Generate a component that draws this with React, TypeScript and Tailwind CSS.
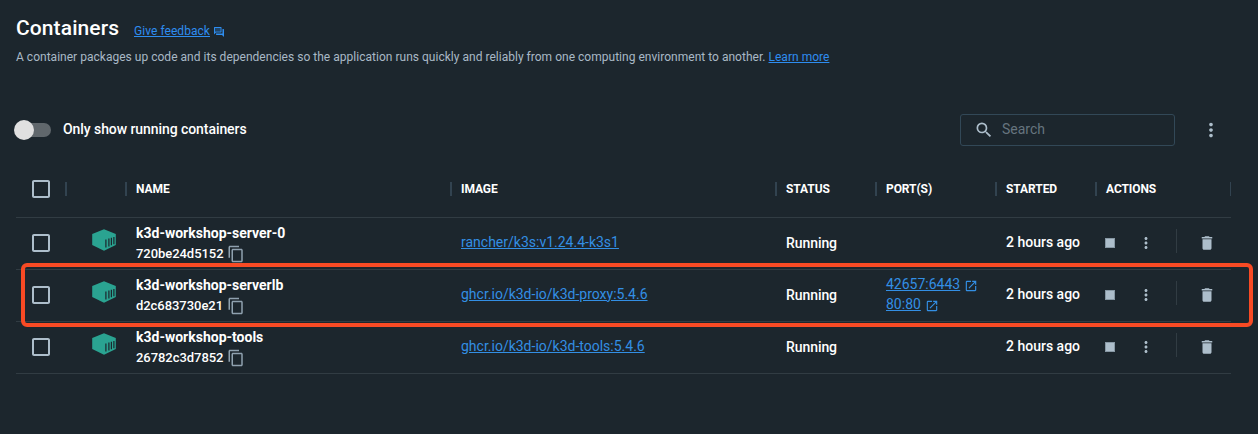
import {
  MdSearch,
  MdMoreVert,
  MdDelete,
  MdOutlineContentCopy,
  MdOpenInNew,
  MdCheckBoxOutlineBlank,
} from "react-icons/md";

type Container = { name: string; id: string; image: string; ports: string[]; highlighted?: boolean };

const containers: Container[] = [
  { name: "k3d-workshop-server-0", id: "720be24d5152", image: "rancher/k3s:v1.24.4-k3s1", ports: [] },
  { name: "k3d-workshop-serverlb", id: "d2c683730e21", image: "ghcr.io/k3d-io/k3d-proxy:5.4.6", ports: ["42657:6443", "80:80"], highlighted: true },
  { name: "k3d-workshop-tools", id: "26782c3d7852", image: "ghcr.io/k3d-io/k3d-tools:5.4.6", ports: [] },
];

const headings = ["", "NAME", "IMAGE", "STATUS", "PORT(S)", "STARTED", "ACTIONS"];

const columns = "grid grid-cols-[50px_60px_325px_325px_100px_120px_100px_135px]";

function ContainerIcon() {
  return (
    <svg width="24" height="22" viewBox="0 0 24 22" className="block">
      <path d="M12 0.3 23.8 5v11L12 21.7 0.2 16V5Z" fill="#2aa391" />
      <path d="M13.9 10.5v8.1M16.9 9.5v7.9M19.4 8.7v7.6M21.9 8v7.2" stroke="#1c262d" strokeWidth="1.2" fill="none" />
    </svg>
  );
}

function FeedbackIcon() {
  return (
    <svg width="12" height="12" viewBox="0 0 24 24" fill="#2e8df0" className="mt-[7px] ml-[3px]">
      <path d="M15 4v7H4V4h11m1-2H3c-.55 0-1 .45-1 1v14l4-4h10c.55 0 1-.45 1-1V3c0-.55-.45-1-1-1zm5 4h-2v9H6v2c0 .55.45 1 1 1h11l4 4V7c0-.55-.45-1-1-1z" />
      <path d="M4 4h11v7H4z" opacity="0.3" />
    </svg>
  );
}

function Row({ item }: { item: Container }) {
  return (
    <div className={`${columns} relative h-[52px] border-b border-[#313c43]`}>
      <div className="flex items-center pb-[2px] pl-[13px]">
        <MdCheckBoxOutlineBlank size={24} className="text-[#adbecb]" />
      </div>
      <div className="flex pt-[11px] pl-[26px]">
        <ContainerIcon />
      </div>
      <div className="flex flex-col pt-[5px] pl-[10px]">
        <span className="text-sm leading-5 font-bold">{item.name}</span>
        <div className="flex gap-[3px] pt-px text-[13px] leading-5 font-medium tracking-[-0.05px]">
          <span className="w-[88px]">{item.id}</span>
          <MdOutlineContentCopy size={18} className="mt-px text-[#8fa1af]" />
        </div>
      </div>
      <div className="flex items-center pb-[4px] pl-[10px] text-sm">
        <a className="text-[#338fe4] underline">{item.image}</a>
      </div>
      <div className="flex items-center pb-[2px] pl-[10px] text-sm font-medium tracking-[-0.07px]">Running</div>
      <div className="flex flex-col justify-center pb-[3px] pl-[10px] text-sm leading-5">
        {item.ports.map((port) => (
          <div key={port} className="flex items-center gap-[4px] text-[#338fe4]">
            <a className="underline">{port}</a>
            <MdOpenInNew size={14} className="mt-[3px]" />
          </div>
        ))}
      </div>
      <div className="flex items-center pb-[4px] pl-[10px] text-sm font-medium">2 hours ago</div>
      <div className="flex items-center pb-[2px] text-[#adbecb]">
        <div className="ml-[9px] flex w-[10px] justify-center">
          <span className="size-[10px] border border-[#8798a4] bg-[#adbecb]" />
        </div>
        <MdMoreVert size={18} className="ml-[22px]" />
        <span className="-mt-[3px] ml-[21px] h-6 w-px bg-[#313c43]" />
        <MdDelete size={18} className="ml-[21px]" />
      </div>
      {item.highlighted && (
        <div className="pointer-events-none absolute -top-[7px] left-[5px] z-10 h-[64px] w-[1232px] rounded-md border-4 border-[#f84a24]" />
      )}
    </div>
  );
}

export default function App() {
  return (
    <div className="h-[434px] w-[1258px] overflow-hidden bg-[#1c262d] pl-4 font-[Roboto,sans-serif] text-white">
      <header className="flex h-[68px] flex-col pt-[14px]">
        <div className="flex h-7 items-center">
          <h1 className="w-[102px] text-[21px] leading-7 font-medium tracking-[0.1px]">Containers</h1>
          <a className="mt-[6px] ml-4 text-xs tracking-[0.05px] text-[#2e8df0] underline">Give feedback</a>
          <FeedbackIcon />
        </div>
        <p className="mt-[5px] text-xs leading-5 tracking-[0.02px] text-[#a9b9c6]">
          A container packages up code and its dependencies so the application runs quickly and reliably from one computing environment to another.{" "}
          <a className="text-[#2e8df0] underline">Learn more</a>
        </p>
      </header>
      <div className="flex h-[94px] items-center pt-[30px]">
        <div className="-ml-[2px] flex h-5 w-[37px] items-center">
          <span className="z-10 size-5 shrink-0 rounded-full bg-[#e0e0e0]" />
          <span className="-ml-[10px] h-[14px] w-[27px] rounded-r-full bg-[#60676c]" />
        </div>
        <span className="mb-[2px] ml-3 text-sm font-medium tracking-[-0.07px]">Only show running containers</span>
        <div className="ml-auto flex h-8 w-[215px] items-center rounded-[3px] border border-[#324857] pl-[13px]">
          <MdSearch size={20} className="text-[#adbecb]" />
          <span className="mb-[2px] ml-2 text-sm text-[#66747e]">Search</span>
        </div>
        <MdMoreVert size={22} className="mr-[36px] ml-[25px] text-[#adbecb]" />
      </div>
      <main className="w-[1215px]">
        <div className={`${columns} h-14 border-b border-[#313c43]`}>
          <div className="flex items-center pb-[2px] pl-[13px]">
            <MdCheckBoxOutlineBlank size={24} className="text-[#adbecb]" />
          </div>
          {headings.map((heading, i) => (
            <div key={i} className="flex items-center pb-[2px] text-xs font-bold">
              <span className="-ml-px h-[14px] w-[2px] bg-[#324350]" />
              <span className="ml-[9px] tracking-[-0.08px]">{heading}</span>
              {heading === "ACTIONS" && <span className="ml-auto h-[14px] w-px bg-[#324350]" />}
            </div>
          ))}
        </div>
        {containers.map((item) => (
          <Row key={item.id} item={item} />
        ))}
      </main>
    </div>
  );
}
